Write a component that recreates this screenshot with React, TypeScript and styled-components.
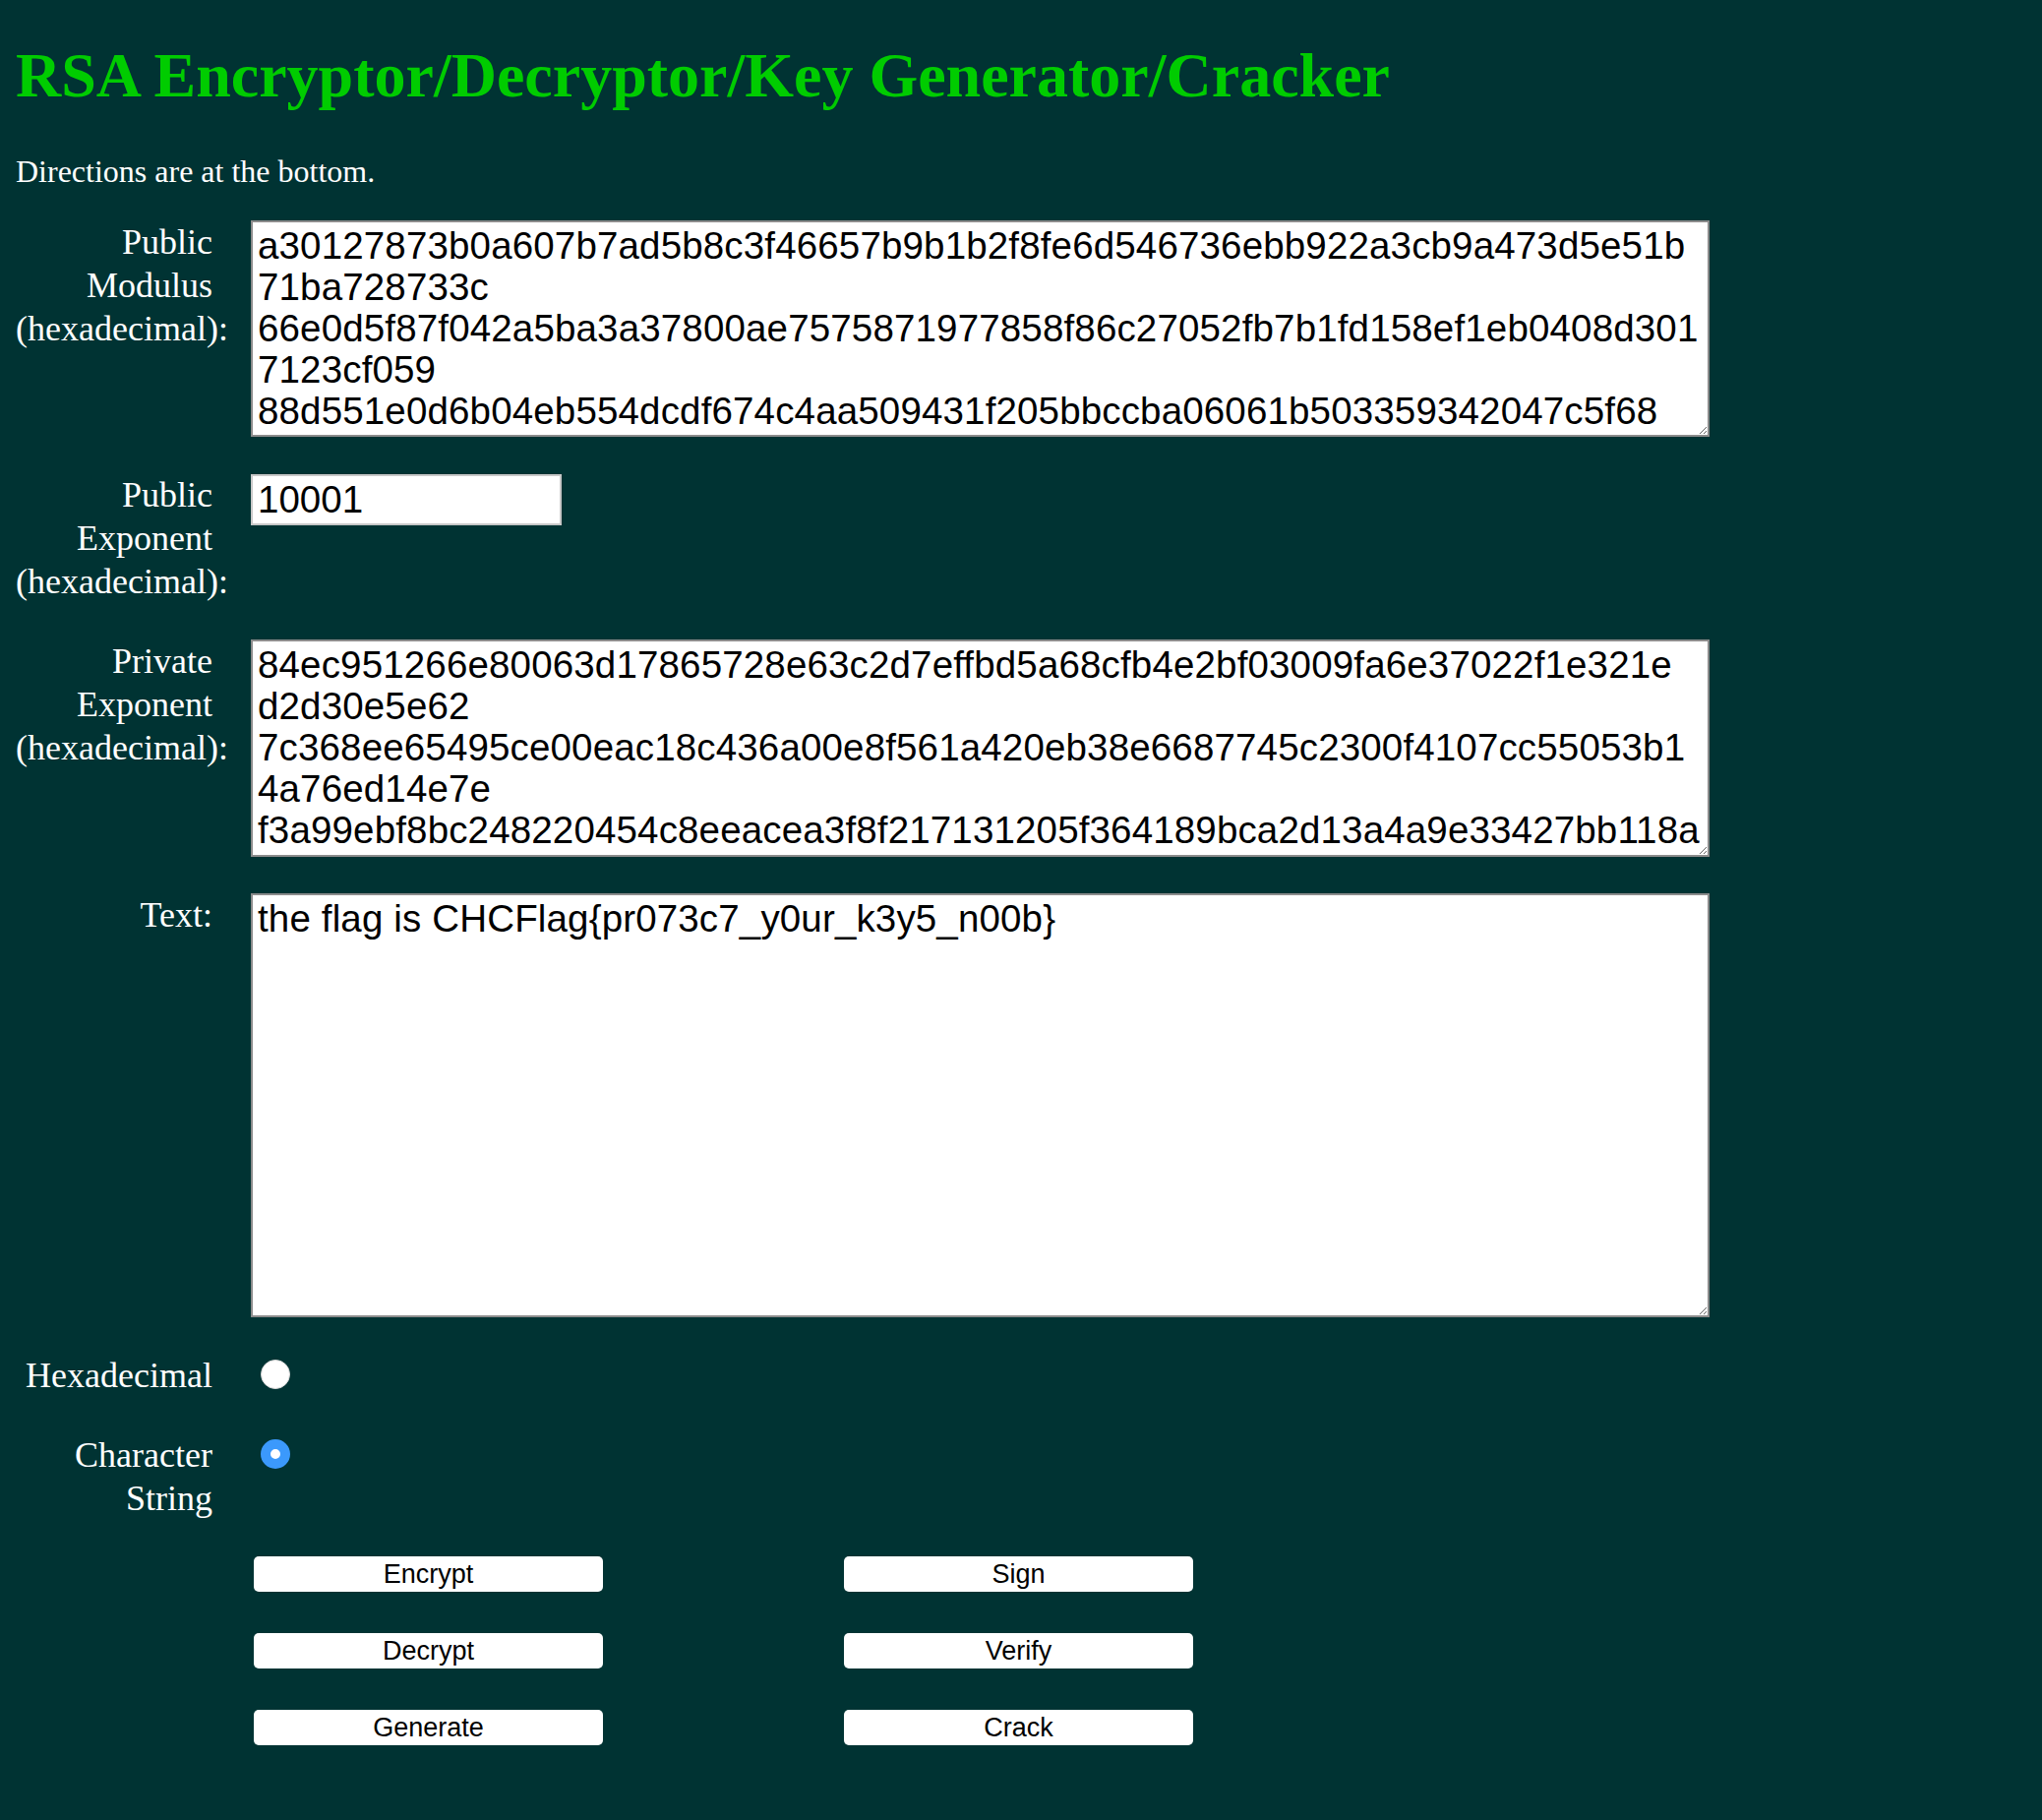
import React, { useState } from 'react';
import styled, { createGlobalStyle } from 'styled-components';

const GlobalStyle = createGlobalStyle`
  html, body {
    margin: 0;
    padding: 0;
    background: #003333;
  }
  body {
    font-family: "Liberation Serif", "Times New Roman", serif;
    color: #ffffff;
  }
`;

const Page = styled.main`
  padding: 40px 16px 60px;
`;

const Title = styled.h1`
  margin: 0;
  font-size: 64px;
  line-height: 74px;
  font-weight: bold;
  color: #00cc00;
  white-space: nowrap;
`;

const Intro = styled.p`
  margin: 40px 0 30px;
  font-size: 32px;
  line-height: 40px;
`;

const Form = styled.form`
  display: flex;
  flex-direction: column;
  gap: 37px;
`;

const Row = styled.div`
  display: grid;
  grid-template-columns: 200px 1483px;
  column-gap: 39px;
  align-items: start;
`;

const Label = styled.label`
  min-width: 0;
  font-size: 36px;
  line-height: 44px;
  text-align: right;
  color: #ffffff;
`;

const TextBox = styled.textarea<{ $height: number }>`
  box-sizing: border-box;
  width: 1483px;
  height: ${(p) => p.$height}px;
  margin: 0;
  padding: 3px 4px 3px 5px;
  border: 2px solid #8c8c8c;
  background: #ffffff;
  color: #000000;
  font-family: "Liberation Sans", Arial, sans-serif;
  font-size: 38.5px;
  letter-spacing: 0.15px;
  line-height: 42px;
  overflow: hidden;
  resize: both;
  outline: none;
  display: block;
`;

const SmallInput = styled.input`
  box-sizing: border-box;
  width: 316px;
  height: 52px;
  margin: 1px 0 0;
  padding: 0 5px;
  border: 2px solid #c8c8c8;
  background: #ffffff;
  color: #000000;
  font-family: "Liberation Sans", Arial, sans-serif;
  font-size: 38.5px;
  outline: none;
  display: block;
`;

const Radio = styled.input`
  appearance: none;
  -webkit-appearance: none;
  box-sizing: border-box;
  width: 30px;
  height: 30px;
  margin: 6px 0 0 10px;
  border-radius: 50%;
  background: #ffffff;
  border: 1px solid #d8d8d8;
  display: block;
  cursor: pointer;

  &:checked {
    border: 10px solid #3b99fc;
    background: #ffffff;
  }
`;

const ButtonGrid = styled.div`
  display: grid;
  grid-template-columns: 355px 355px;
  column-gap: 245px;
  row-gap: 42px;
  padding-left: 3px;
`;

const ActionButton = styled.button`
  box-sizing: border-box;
  height: 36px;
  margin: 0;
  padding: 0;
  border: none;
  border-radius: 5px;
  background: #ffffff;
  color: #000000;
  font-family: "Liberation Sans", Arial, sans-serif;
  font-size: 27px;
  line-height: 36px;
  text-align: center;
  cursor: pointer;
`;

const modulus = [
  'a30127873b0a607b7ad5b8c3f46657b9b1b2f8fe6d546736ebb922a3cb9a473d5e51b',
  '71ba728733c',
  '66e0d5f87f042a5ba3a37800ae7575871977858f86c27052fb7b1fd158ef1eb0408d301',
  '7123cf059',
  '88d551e0d6b04eb554dcdf674c4aa509431f205bbccba06061b503359342047c5f68',
  '2d41b7e09c',
  '5fa0c3b91e72d84a6b03f59e21c7d84b0a93e6f5127c8d04b9e3a61f52d8c07e4b19',
  'a36f0d25c8e',
].join('\n');

const privateExp = [
  '84ec951266e80063d17865728e63c2d7effbd5a68cfb4e2bf03009fa6e37022f1e321e',
  'd2d30e5e62',
  '7c368ee65495ce00eac18c436a00e8f561a420eb38e6687745c2300f4107cc55053b1',
  '4a76ed14e7e',
  'f3a99ebf8bc248220454c8eeacea3f8f217131205f364189bca2d13a4a9e33427bb118a',
  '0c92d7e14b',
  'b7e21f05a94c3d68e0b1f7a25c96d43e8a07b5f1c29e64d03a8b71e5f2c09d46a3b7',
  '5e1d9c04f8a',
].join('\n');

export default function App() {
  const [mode, setMode] = useState<'hex' | 'str'>('str');
  const [mod, setMod] = useState(modulus);
  const [pub, setPub] = useState('10001');
  const [priv, setPriv] = useState(privateExp);
  const [text, setText] = useState('the flag is CHCFlag{pr073c7_y0ur_k3y5_n00b}');

  return (
    <>
      <GlobalStyle />
      <Page>
        <Title>RSA Encryptor/Decryptor/Key Generator/Cracker</Title>
        <Intro>Directions are at the bottom.</Intro>
        <Form onSubmit={(e) => e.preventDefault()}>
          <Row>
            <Label htmlFor="modulus">Public Modulus (hexadecimal):</Label>
            <TextBox
              id="modulus"
              $height={220}
              spellCheck={false}
              value={mod}
              onChange={(e) => setMod(e.target.value)}
            />
          </Row>
          <Row>
            <Label htmlFor="pubexp">Public Exponent (hexadecimal):</Label>
            <SmallInput
              id="pubexp"
              type="text"
              spellCheck={false}
              value={pub}
              onChange={(e) => setPub(e.target.value)}
            />
          </Row>
          <Row>
            <Label htmlFor="privexp">Private Exponent (hexadecimal):</Label>
            <TextBox
              id="privexp"
              $height={221}
              spellCheck={false}
              value={priv}
              onChange={(e) => setPriv(e.target.value)}
            />
          </Row>
          <Row>
            <Label htmlFor="text">Text:</Label>
            <TextBox
              id="text"
              $height={431}
              spellCheck={false}
              value={text}
              onChange={(e) => setText(e.target.value)}
            />
          </Row>
          <Row>
            <Label htmlFor="hex">Hexadecimal</Label>
            <Radio
              id="hex"
              type="radio"
              name="format"
              checked={mode === 'hex'}
              onChange={() => setMode('hex')}
            />
          </Row>
          <Row>
            <Label htmlFor="str">Character String</Label>
            <Radio
              id="str"
              type="radio"
              name="format"
              checked={mode === 'str'}
              onChange={() => setMode('str')}
            />
          </Row>
          <Row>
            <span />
            <ButtonGrid>
              <ActionButton type="button">Encrypt</ActionButton>
              <ActionButton type="button">Sign</ActionButton>
              <ActionButton type="button">Decrypt</ActionButton>
              <ActionButton type="button">Verify</ActionButton>
              <ActionButton type="button">Generate</ActionButton>
              <ActionButton type="button">Crack</ActionButton>
            </ButtonGrid>
          </Row>
        </Form>
      </Page>
    </>
  );
}
